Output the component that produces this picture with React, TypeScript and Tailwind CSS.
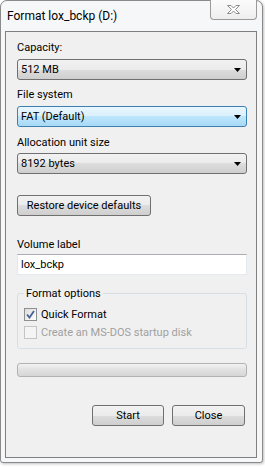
const font = { fontFamily: 'Roboto, "Segoe UI", sans-serif' };

function Arrow() {
  return (
    <svg width="7" height="4" viewBox="0 0 7 4">
      <path d="M0 0h7L3.5 4z" fill="#000" />
    </svg>
  );
}

function Combo({ value, focused }: { value: string; focused?: boolean }) {
  return (
    <div
      className={
        focused
          ? "h-[21px] w-[230px] rounded-[3px] border border-[#3c7fb1] bg-[linear-gradient(#eaf6fd_0%,#d9f0fc_50%,#bee6fd_50%,#a7d9f5_100%)] flex items-center justify-between pl-[3px] pr-[5px]"
          : "h-[21px] w-[230px] rounded-[3px] border border-[#707070] bg-[linear-gradient(#f2f2f2_0%,#ebebeb_50%,#dddddd_50%,#cfcfcf_100%)] flex items-center justify-between pl-[3px] pr-[5px]"
      }
    >
      <span>{value}</span>
      <Arrow />
    </div>
  );
}

function Button({ label, className }: { label: string; className: string }) {
  return (
    <div
      className={`h-[21px] rounded-[3px] border border-[#707070] bg-[linear-gradient(#f2f2f2_0%,#ebebeb_50%,#dddddd_50%,#cfcfcf_100%)] flex items-center justify-center ${className}`}
    >
      {label}
    </div>
  );
}

function Check({ checked, disabled }: { checked?: boolean; disabled?: boolean }) {
  return (
    <div
      className={
        disabled
          ? "w-[13px] h-[13px] border border-[#c4c4c4] bg-[#f4f4f4]"
          : "w-[13px] h-[13px] border border-[#8e8f8f] bg-[linear-gradient(135deg,#dcdcdc,#ffffff)] flex items-center justify-center"
      }
    >
      {checked && (
        <svg width="9" height="9" viewBox="0 0 9 9">
          <path d="M1 4.5l2.5 3L8 1" fill="none" stroke="#4a5f97" strokeWidth="1.8" />
        </svg>
      )}
    </div>
  );
}

export default function App() {
  return (
    <div className="w-[265px] h-[467px] bg-white text-[11px] leading-[15px] text-black" style={font}>
      <div className="w-[263px] h-[463px] border border-[#8a8a8a] rounded-t-[7px] rounded-b-[3px] bg-[#f6f7f8] flex flex-col pl-[4px] pr-[5px] pb-[4px] shadow-[1px_1px_3px_rgba(0,0,0,0.25)]">
        {/* Title bar */}
        <div className="h-[30px] flex items-start justify-between">
          <div className="pt-[8px] pl-[2px] text-[12px]">Format lox_bckp (D:)</div>
          <div className="w-[47px] h-[20px] -mt-[1px] border border-t-0 border-[#9a9a9a] rounded-b-[4px] bg-[linear-gradient(#fbfbfb,#eeeeee)] flex items-center justify-center">
            <svg width="15" height="11" viewBox="0 0 15 11">
              <path
                d="M1.5 1.5h3.5l2.5 2.5 2.5-2.5h3.5l-4 4 4 4h-3.5l-2.5-2.5-2.5 2.5h-3.5l4-4z"
                fill="#ffffff"
                stroke="#8c8c8c"
                strokeWidth="1"
                strokeLinejoin="round"
              />
            </svg>
          </div>
        </div>

        {/* Client area */}
        <div className="flex-1 border border-[#7f7f7f] bg-[#f0f0f0] pl-[11px] flex flex-col">
          <div className="mt-[8px]">Capacity:</div>
          <div className="mt-[4px]">
            <Combo value="512 MB" />
          </div>
          <div className="mt-[7px]">File system</div>
          <div className="mt-[4px]">
            <Combo value="FAT (Default)" focused />
          </div>
          <div className="mt-[8px]">Allocation unit size</div>
          <div className="mt-[3px]">
            <Combo value="8192 bytes" />
          </div>
          <Button label="Restore device defaults" className="mt-[21px] w-[134px]" />

          <div className="mt-[21px]">Volume label</div>
          <div className="mt-[2px] w-[230px] h-[21px] bg-white border border-[#e3e9ef] border-t-[#abadb3] flex items-center pl-[3px]">
            lox_bckp
          </div>

          {/* Format options group */}
          <div className="mt-[18px] w-[230px] h-[56px] border border-[#d5dfe5] rounded-[3px] relative pt-[13px] pl-[6px] flex flex-col gap-[3px]">
            <div className="absolute -top-[8px] left-[6px] px-[2px] bg-[#f0f0f0]">Format options</div>
            <div className="flex items-center gap-[4px]">
              <Check checked />
              <span>Quick Format</span>
            </div>
            <div className="flex items-center gap-[4px] text-[#a0a0a0]">
              <Check disabled />
              <span>Create an MS-DOS startup disk</span>
            </div>
          </div>

          <div className="mt-[14px] w-[230px] h-[14px] rounded-[3px] border border-[#b2b2b2] bg-[linear-gradient(#f3f3f3_0%,#e2e2e2_45%,#d6d6d6_100%)]" />

          <div className="mt-[28px] flex pl-[75px] gap-[8px]">
            <Button label="Start" className="w-[72px]" />
            <Button label="Close" className="w-[73px]" />
          </div>
        </div>
      </div>
    </div>
  );
}
